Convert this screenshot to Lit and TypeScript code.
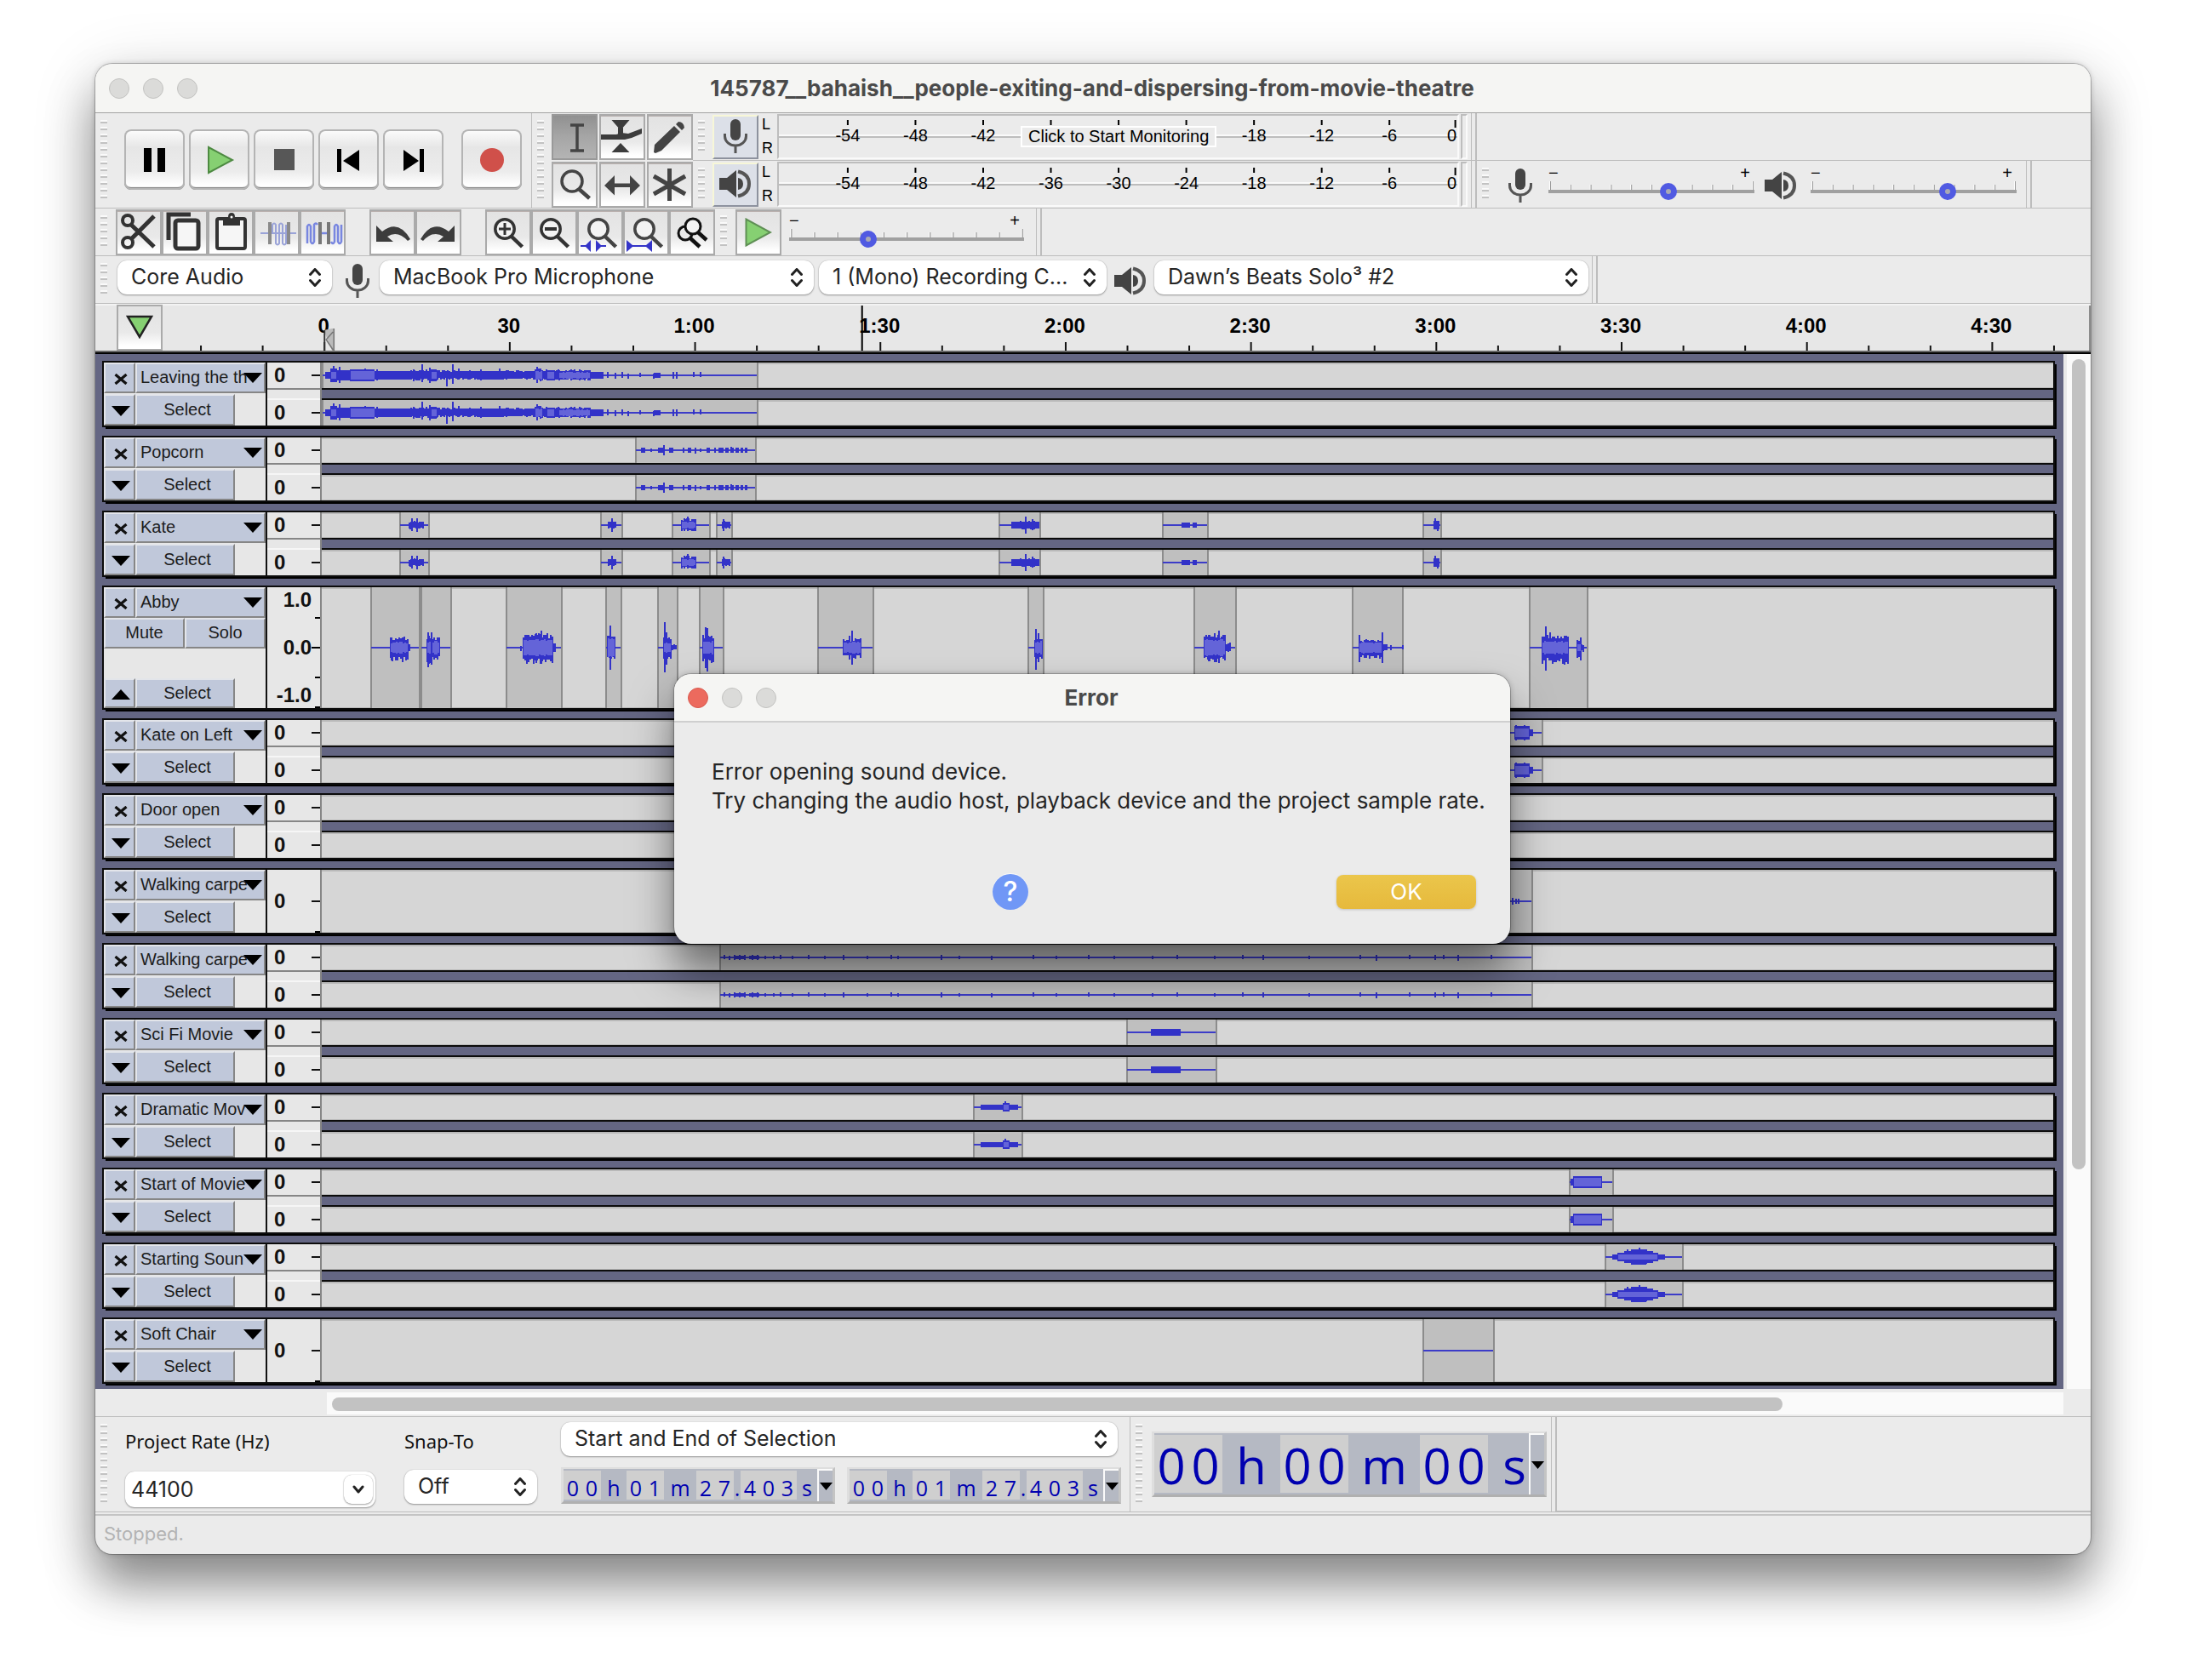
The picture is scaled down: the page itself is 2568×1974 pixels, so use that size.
import { LitElement, html, css, svg, nothing } from "lit";
import { customElement, property } from "lit/decorators.js";

type Burst = [number, number, number, number, number?];
type Spike = [number, number, number];
interface Clip {
  from: number;
  to: number;
  bursts?: Burst[];
  spikes?: Spike[];
}
interface Track {
  name: string;
  kind: "stereo" | "mono" | "tall";
  clips: Clip[];
}

const LANE = 2034;

const leaving: Clip[] = [{
  from: 0, to: 513,
  bursts: [
    [4, 10, 4, 4], [10, 18, 8, 8, 4], [18, 33, 6, 6], [33, 62, 7, 7, 5], [62, 104, 5, 5], [104, 135, 7, 6], [128, 135, 7, 7, 4],
    [135, 182, 6, 5], [182, 214, 5, 5], [214, 250, 6, 5], [250, 259, 8, 7, 5], [259, 278, 7, 6], [264, 274, 6, 6, 4],
    [278, 316, 7, 6, 4], [316, 331, 4, 4], [390, 398, 3, 3],
  ],
  spikes: [[13, 11, 8], [20, 10, 9], [50, 8, 7], [64, 7, 6], [107, 7, 7], [117, 13, 8], [126, 9, 9], [146, 5, 13], [153, 13, 10], [160, 8, 5], [186, 7, 6], [208, 8, 5], [252, 10, 9], [335, 4, 3], [344, 3, 4], [352, 4, 3], [359, 2, 4], [373, 3, 2], [389, 2, 4], [412, 4, 4], [416, 4, 4], [436, 4, 2], [444, 4, 2]],
}];
const popcorn: Clip[] = [{
  from: 368, to: 511,
  bursts: [[375, 380, 3, 3], [395, 403, 3, 3], [408, 413, 3, 3], [430, 434, 3, 3], [452, 456, 3, 3], [466, 472, 3, 3], [474, 478, 3, 3], [480, 484, 3, 3], [486, 490, 3, 3], [492, 495, 3, 3], [497, 500, 3, 3]],
  spikes: [[386, 2, 2], [401, 6, 6], [424, 3, 3], [438, 3, 4], [444, 2, 2], [461, 3, 3], [480, 4, 3]],
}];
const kate: Clip[] = [
  { from: 91, to: 127, bursts: [[102, 120, 5, 4]], spikes: [[105, 8, 7], [111, 8, 8], [103, 3, 5]] },
  { from: 327, to: 354, bursts: [[336, 345, 5, 4]], spikes: [[340, 8, 8]] },
  { from: 411, to: 457, bursts: [[422, 440, 8, 7, 4]], spikes: [[429, 10, 7], [425, 8, 7]] },
  { from: 463, to: 483, bursts: [[470, 479, 5, 4]], spikes: [[471, 7, 7]] },
  { from: 795, to: 845, bursts: [[810, 843, 4, 4], [820, 838, 5, 6]], spikes: [[826, 10, 10], [834, 7, 6]] },
  { from: 987, to: 1042, bursts: [[1010, 1020, 3, 3], [1023, 1028, 3, 3]] },
  { from: 1293, to: 1316, bursts: [[1306, 1313, 5, 5]], spikes: [[1307, 8, 5], [1310, 5, 7]] },
];
const abby: Clip[] = [
  { from: 57, to: 116, bursts: [[80, 101, 13, 16, 7], [101, 104, 4, 4]], spikes: [[81, 12, 15], [94, 12, 17]] },
  { from: 116, to: 153, bursts: [[123, 129, 15, 21, 8], [129, 138, 13, 15, 8]], spikes: [[124, 18, 23], [128, 18, 20]] },
  { from: 216, to: 283, bursts: [[236, 271, 17, 19, 10], [271, 275, 5, 5]], spikes: [[257, 20, 19], [242, 15, 17], [251, 17, 18], [233, 2, 4]] },
  { from: 333, to: 353, bursts: [[335, 344, 14, 15, 11]], spikes: [[338, 26, 26]] },
  { from: 394, to: 419, bursts: [[401, 411, 13, 14, 6], [411, 417, 4, 3]], spikes: [[402, 30, 29], [404, 18, 20]] },
  { from: 443, to: 473, bursts: [[447, 461, 16, 18, 8]], spikes: [[450, 24, 24], [452, 23, 28]] },
  { from: 582, to: 649, bursts: [[612, 634, 11, 13, 7]], spikes: [[622, 20, 20], [619, 14, 14]] },
  { from: 829, to: 849, bursts: [[837, 846, 13, 14, 8]], spikes: [[838, 22, 26], [841, 17, 17]] },
  { from: 1024, to: 1075, bursts: [[1036, 1062, 16, 17, 10], [1062, 1067, 6, 5]], spikes: [[1041, 15, 16], [1053, 20, 18], [1048, 17, 17], [1060, 14, 14]] },
  { from: 1210, to: 1271, bursts: [[1218, 1246, 11, 13, 7], [1246, 1251, 5, 4]], spikes: [[1218, 15, 17], [1245, 18, 18], [1255, 3, 3], [1269, 3, 2]] },
  { from: 1418, to: 1488, bursts: [[1433, 1465, 15, 19, 8], [1474, 1479, 12, 17, 4], [1479, 1482, 4, 5]], spikes: [[1437, 25, 27], [1442, 18, 14], [1459, 13, 20], [1461, 14, 10]] },
];
const kateLeft: Clip[] = [{ from: 1310, to: 1435, bursts: [[1401, 1419, 8, 8, 5], [1419, 1423, 4, 4]], spikes: [[1402, 9, 9], [1412, 9, 9]] }];
const walkingMono: Clip[] = [{ from: 468, to: 1423, spikes: [[1398, 4, 4], [1402, 3, 3], [1405, 3, 3]] }];
const walking: Clip[] = [{
  from: 467, to: 1423,
  bursts: [[486, 498, 2, 2], [502, 514, 2, 2]],
  spikes: [[472, 3, 2], [478, 2, 3], [484, 3, 3], [490, 3, 3], [496, 3, 3], [505, 3, 3], [511, 3, 3], [520, 2, 2], [530, 2, 2], [538, 3, 2], [552, 2, 2], [571, 3, 2], [590, 2, 2], [612, 3, 3], [640, 2, 2], [668, 3, 2], [676, 2, 2], [727, 3, 3], [748, 2, 2], [786, 2, 3], [835, 3, 2], [862, 2, 2], [900, 3, 2], [930, 2, 2], [975, 2, 2], [1004, 3, 2], [1048, 2, 2], [1081, 3, 2], [1105, 3, 3], [1159, 2, 2], [1219, 3, 2], [1238, 3, 4], [1277, 3, 2], [1307, 3, 3], [1317, 3, 2], [1334, 3, 4], [1373, 3, 2]],
}];
const sciFi: Clip[] = [{ from: 945, to: 1052, bursts: [[974, 1009, 4, 4]] }];
const dramatic: Clip[] = [{ from: 765, to: 824, bursts: [[774, 818, 3, 3], [800, 808, 5, 5, 3]], spikes: [[802, 7, 4]] }];
const startMovie: Clip[] = [{ from: 1465, to: 1518, bursts: [[1467, 1470, 4, 4], [1470, 1504, 7, 7, 5]] }];
const starting: Clip[] = [{
  from: 1507, to: 1600,
  bursts: [[1516, 1578, 3, 3], [1522, 1570, 5, 5, 3], [1530, 1564, 7, 7, 3], [1538, 1556, 9, 9, 3]],
  spikes: [[1533, 9, 6], [1547, 11, 9], [1555, 9, 8]],
}];
const softChair: Clip[] = [{ from: 1293, to: 1378 }];

const TRACKS: Track[] = [
  { name: "Leaving the th", kind: "stereo", clips: leaving },
  { name: "Popcorn", kind: "stereo", clips: popcorn },
  { name: "Kate", kind: "stereo", clips: kate },
  { name: "Abby", kind: "tall", clips: abby },
  { name: "Kate on Left", kind: "stereo", clips: kateLeft },
  { name: "Door open", kind: "stereo", clips: [] },
  { name: "Walking carpe", kind: "mono", clips: walkingMono },
  { name: "Walking carpe", kind: "stereo", clips: walking },
  { name: "Sci Fi Movie", kind: "stereo", clips: sciFi },
  { name: "Dramatic Mov", kind: "stereo", clips: dramatic },
  { name: "Start of Movie", kind: "stereo", clips: startMovie },
  { name: "Starting Soun", kind: "stereo", clips: starting },
  { name: "Soft Chair", kind: "mono", clips: softChair },
];

const noise = (n: number) => {
  const s = Math.sin(n * 12.9898) * 43758.5453;
  return s - Math.floor(s);
};

function peaksPath(clip: Clip, mid: number): string {
  let d = "";
  for (const [a, b, up, down] of clip.bursts ?? []) {
    if (up === down) {
      d += `M${a} ${mid - up}H${b}V${mid + down}H${a}z`;
      continue;
    }
    for (let x = a; x < b; x += 2) {
      const top = Math.round(up * (0.65 + 0.35 * noise(x)));
      const bottom = Math.round(down * (0.65 + 0.35 * noise(x + 7)));
      d += `M${x} ${mid - top}h2V${mid + bottom}h-2z`;
    }
  }
  for (const [x, up, down] of clip.spikes ?? []) d += `M${x} ${mid - up}h2V${mid + down}h-2z`;
  return d;
}

function bodyPath(clip: Clip, mid: number): string {
  let d = "";
  for (const [a, b, up, down, rms] of clip.bursts ?? []) {
    if (!rms) continue;
    for (let x = a + 1; x < b - 1; x += 2) {
      const r = up === down ? rms : Math.round(rms * (0.75 + 0.25 * noise(x + 3)));
      d += `M${x} ${mid - r}h2V${mid + r}h-2z`;
    }
  }
  return d;
}

const shared = css`
  :host { box-sizing: border-box; }
  *, *::before, *::after { box-sizing: border-box; }
  button, select, input { font: inherit; color: inherit; margin: 0; padding: 0; border: 0; border-radius: 0; background: none; }
  button { display: flex; align-items: center; justify-content: center; }
  svg { display: block; flex: none; }
`;

const mic = html`<svg width="28" height="40" viewBox="0 0 28 40" aria-hidden="true"><rect x="8" y="0" width="12" height="25" rx="6" fill="#454545"/><path d="M1.500 17v3a12.500 11 0 0 0 25 0v-3M14 31v9" fill="none" stroke="#555" stroke-width="3"/></svg>`;
const speaker = html`<svg width="38" height="36" viewBox="0 0 38 36" aria-hidden="true"><path d="M0 11h9L20 2v32L9 25H0z" fill="#444"/><path d="M22 11q6 1 6 7t-6 7z" fill="#444"/><path d="M22 3.500q13 3 13 14.500T22 32.500" fill="none" stroke="#555" stroke-width="4"/></svg>`;
const playIcon = html`<svg width="32" height="34" viewBox="0 0 32 34" aria-hidden="true"><path d="M1.500 1.500v31L30 17z" fill="#86d072" stroke="#5f8f55" stroke-width="2"/></svg>`;

@customElement("wave-lane")
class WaveLane extends LitElement {
  @property({ attribute: false }) clips: Clip[] = [];
  @property({ type: Number }) height = 30;

  static styles = css`
    :host { display: block; background: #d6d6d6; box-shadow: inset 0 2px #b9b9b9, inset 0 -1px #b9b9b9; }
    svg { display: block; width: 100%; }
  `;

  render() {
    const h = this.height;
    const mid = h / 2;
    return html`<svg height=${h} viewBox="0 0 ${LANE} ${h}" preserveAspectRatio="none" aria-hidden="true">
      ${this.clips.map((c) => svg`
        <rect x=${c.from} y="0" width=${c.to - c.from} height=${h} fill="#bfbfbf"/>
        <path d="M${c.from} 0h2v${h}h-2zM${c.to - 2} 0h2v${h}h-2z" fill="#8c8c8c"/>
        <path d="M${c.from + 1} ${mid - 1}H${c.to - 2}v2H${c.from + 1}z" fill="#3c3cc8"/>
        <path d=${peaksPath(c, mid)} fill="#3232c8"/>
        <path d=${bodyPath(c, mid)} fill="#6464d8"/>`)}
    </svg>`;
  }
}

@customElement("track-row")
class TrackRow extends LitElement {
  @property({ attribute: false }) track!: Track;

  static styles = [shared, css`
    :host { display: block; font: 20px/24px "Liberation Sans", Arial, sans-serif; color: #1c1c1c; }
    .track { display: flex; border: 2px solid #0c0c0c; box-shadow: 3px 3px 0 -1px #000; background: #e7e7e7; }
    .panel { display: flex; flex-direction: column; flex: none; width: 192px; border-right: 2px solid #111; }
    .bar { display: flex; height: 36px; }
    .bar.last { height: 38px; padding-top: 1px; }
    .tall .bar.last { height: 36px; }
    .space { flex: 1; }
    .cell { height: 100%; padding-bottom: 2px; background: #c0c8da; border: solid; border-width: 2px; border-color: #e3e5ea #868686 #868686 #e3e5ea; }
    .icon { width: 37px; padding: 2px 0 0 2px; }
    .name { flex: 1; min-width: 0; padding: 0 2px 2px 4px; }
    .name span { flex: 1; min-width: 0; white-space: nowrap; text-align: left; }
    .name svg { margin-top: 2px; }
    .select { width: 117px; padding-left: 5px; }
    .half { flex: 1; }
    .scale { display: flex; flex-direction: column; flex: none; width: 64px; border-right: 2px solid #868686; font: bold 24px/30px "Liberation Sans", Arial, sans-serif; color: #111; }
    .mark { display: flex; align-items: center; justify-content: space-between; height: 30px; padding-left: 8px; }
    .mark::after { content: ""; width: 10px; height: 2px; background: #111; }
    .upper { box-shadow: 0 2px #868686; margin-bottom: 12px; }
    .lower { height: 32px; border-top: 2px solid #f6f6f6; }
    .whole { flex: 1; height: auto; }
    .levels { display: flex; flex-direction: column; flex: 1; justify-content: space-between; align-items: flex-end; padding-right: 10px; }
    .scale-tall { position: relative; display: flex; flex: 1; }
    .ticks { position: absolute; right: 0; top: 0; }
    .lanes { flex: 1; min-width: 0; }
    .gutter { height: 14px; border: solid #0c0c0c; border-width: 2px 0; background: #646683; }
  `];

  private scale() {
    const { kind } = this.track;
    if (kind === "stereo") return html`<div class="mark upper">0</div><div class="mark lower">0</div>`;
    if (kind === "mono") return html`<div class="scale-tall"><div class="mark whole">0</div>
      <svg class="ticks" width="6" height="74" aria-hidden="true"><path d="M0 72h6v2H0z"/></svg></div>`;
    return html`<div class="scale-tall"><div class="levels"><span>1.0</span><span>0.0</span><span>-1.0</span></div>
      <svg class="ticks" width="10" height="142" aria-hidden="true"><path d="M4 35h6v2H4zM0 70h10v2H0zM4 105h6v2H4zM4 140h6v2H4z"/></svg></div>`;
  }

  render() {
    const t = this.track;
    const tall = t.kind === "tall";
    return html`<section class="track ${t.kind}" aria-label=${t.name}>
      <div class="panel">
        <div class="bar">
          <button class="cell icon" aria-label="Close"><svg width="16" height="13" viewBox="0 0 16 13"><path d="M1.500 1 14.500 12M14.500 1 1.500 12" stroke="#111" stroke-width="3.200"/></svg></button>
          <button class="cell name"><span>${t.name}</span><svg width="22" height="12" viewBox="0 0 22 12"><path d="M0 0h22L11 12z"/></svg></button>
        </div>
        ${tall ? html`<div class="bar"><button class="cell half">Mute</button><button class="cell half">Solo</button></div><div class="space"></div>` : nothing}
        <div class="bar last">
          <button class="cell icon" aria-label=${tall ? "Collapse" : "Expand"}><svg width="22" height="12" viewBox="0 0 22 12"><path d=${tall ? "M0 12h22L11 0z" : "M0 0h22L11 12z"}/></svg></button>
          <button class="cell select">Select</button>
        </div>
      </div>
      <div class="scale">${this.scale()}</div>
      <div class="lanes">
        <wave-lane .clips=${t.clips} .height=${tall ? 142 : t.kind === "mono" ? 74 : 30}></wave-lane>
        ${t.kind === "stereo" ? html`<div class="gutter"></div><wave-lane .clips=${t.clips}></wave-lane>` : nothing}
      </div>
    </section>`;
  }
}

@customElement("tick-slider")
class TickSlider extends LitElement {
  @property() label = "";
  @property({ type: Number }) value = 0;

  static styles = [shared, css`
    :host { display: flex; flex-direction: column; width: 242px; font: 20px/14px "Liberation Sans", Arial, sans-serif; color: #000; }
    .signs { display: flex; justify-content: space-between; padding: 0 5px 0 0; }
    .scale { width: 100%; margin: 3px 0 -9px; }
    input { appearance: none; -webkit-appearance: none; display: block; width: 100%; height: 22px; }
    input::-webkit-slider-runnable-track { height: 4px; background: #a0a0a0; }
    input::-webkit-slider-thumb { appearance: none; -webkit-appearance: none; width: 20px; height: 20px; margin-top: -8px; border-radius: 50%; border: 7px solid #505ae2; background: #a9a9b4; }
  `];

  render() {
    return html`<div class="signs" aria-hidden="true"><span>−</span><span>+</span></div>
      <svg class="scale" height="10" viewBox="0 0 242 10" preserveAspectRatio="none" aria-hidden="true">
        ${Array.from({ length: 11 }, (_, i) => {
          const x = 1 + i * 23.8;
          const y = i % 10 === 0 ? 0 : 4;
          return svg`<path d="M${x} ${y}h1v10h-1z" fill="#fff"/><path d="M${x + 1} ${y}h1v10h-1z" fill="#999"/>`;
        })}
      </svg>
      <input type="range" min="0" max="1000" .value=${String(this.value)} aria-label=${this.label}>`;
  }
}

@customElement("level-meter")
class LevelMeter extends LitElement {
  @property() label = "";
  @property() prompt = "";
  @property({ attribute: false }) icon: unknown = nothing;

  static styles = [shared, css`
    :host { display: flex; align-items: center; gap: 4px; font: 20px/24px "Liberation Sans", Arial, sans-serif; color: #000; }
    .source { width: 54px; height: 52px; padding-bottom: 2px; background: #dce0e8; border: solid; border-width: 2px; border-color: #f7f7d8 #8d929e #8d929e #f7f7d8; }
    .sides { display: flex; flex-direction: column; justify-content: space-between; width: 14px; height: 52px; padding-bottom: 2px; font-size: 18px; line-height: 22px; }
    .meter { position: relative; width: 801px; height: 53px; border: solid; border-width: 2px; border-color: #bdbdbd #fafafa #fafafa #bdbdbd; }
    .meter svg { width: 100%; }
    .prompt { position: absolute; left: 284px; top: 12px; height: 25px; padding: 0 7px 2px; border: 2px solid #fff; background: #ebebeb; white-space: nowrap; }
    .clip { width: 8px; height: 53px; margin-left: -2px; border: solid; border-width: 2px; border-color: #bdbdbd #fafafa #fafafa #bdbdbd; }
  `];

  render() {
    const marks = [-54, -48, -42, -36, -30, -24, -18, -12, -6];
    const covered = (m: number) => this.prompt !== "" && m >= -36 && m <= -24;
    return html`<button class="source" aria-label=${this.label}>${this.icon}</button>
      <div class="sides"><span>L</span><span>R</span></div>
      <div class="meter" role="meter" aria-label=${this.label} aria-valuenow="-60" aria-valuemin="-60" aria-valuemax="0">
        <svg height="49">
          <rect x="0" y="22" width="100%" height="2" fill="#fafafa"/><rect x="0" y="24" width="100%" height="2" fill="#bdbdbd"/>
          ${marks.map((m, i) => {
            const x = `${10.15 + i * 9.98}%`;
            return svg`<line x1=${x} x2=${x} y1="5" y2="11" stroke="#000" stroke-width="2"/>${covered(m) ? nothing : svg`<text x=${x} y="30" text-anchor="middle">${m}</text>`}`;
          })}
          <line x1="99.700%" x2="99.700%" y1="5" y2="14" stroke="#000" stroke-width="2"/>
          <text x="99.900%" y="30" text-anchor="end">0</text>
        </svg>
        ${this.prompt ? html`<button class="prompt">${this.prompt}</button>` : nothing}
      </div>
      <div class="clip"></div>`;
  }
}

@customElement("popup-select")
class PopupSelect extends LitElement {
  @property() value = "";
  @property() label = "";

  static styles = [shared, css`
    :host { display: block; position: relative; flex: none; font: 25px/30px Inter, "Liberation Sans", sans-serif; color: #252525; }
    select { appearance: none; -webkit-appearance: none; width: 100%; height: 40px; padding: 0 40px 3px 16px; border-radius: 11px; background: #fff; box-shadow: 0 1px 2px rgba(0, 0, 0, 0.35), 0 0 1px rgba(0, 0, 0, 0.3); }
    svg { position: absolute; right: 13px; top: 9px; pointer-events: none; }
  `];

  render() {
    return html`<select aria-label=${this.label}><option>${this.value}</option></select>
      <svg width="14" height="22" viewBox="0 0 14 22" aria-hidden="true"><path d="M1.500 7.500 7 1.500l5.500 6M1.500 14.500l5.500 6 5.500-6" fill="none" stroke="#222" stroke-width="3" stroke-linejoin="round" stroke-linecap="round"/></svg>`;
  }
}

@customElement("time-field")
class TimeField extends LitElement {
  @property() value = "";
  @property() label = "";

  static styles = [shared, css`
    :host { display: block; flex: none; border: solid; border-width: 2px 3px 3px; border-color: #dedede #c4c4c4 #b0b0b0 #dedede; color: #0000b0; font: 500 25px/34px "Open Sans", "DejaVu Sans", sans-serif; }
    .time { display: flex; align-items: stretch; height: 38px; padding: 2px 0; background: #b5b9c3; }
    .digits { display: flex; background: #cfcfcf; line-height: 40px; }
    .digit { width: 22px; text-align: center; }
    .unit { display: flex; justify-content: center; line-height: 40px; }
    .h { width: 30px; }
    .m { width: 38px; }
    .s { width: 24px; }
    .dot { width: 8px; }
    .drop { width: 18px; margin: -2px 0; border: solid #fafafa; border-width: 2px 0 0 2px; }
    :host([big]) { font-size: 58px; }
    :host([big]) .time { height: 72px; }
    :host([big]) .digits, :host([big]) .unit { line-height: 72px; }
    :host([big]) .digit { width: 40px; }
    :host([big]) .h { width: 68px; }
    :host([big]) .m { width: 84px; }
    :host([big]) .s { width: 48px; padding-left: 14px; }
  `];

  render() {
    const parts = this.value.match(/\d+|[hms.]/g) ?? [];
    return html`<div class="time" role="group" aria-label=${this.label}>
      ${parts.map((p) => /\d/.test(p)
        ? html`<span class="digits">${[...p].map((d) => html`<span class="digit">${d}</span>`)}</span>`
        : html`<span class="unit ${p === "." ? "dot" : p}">${p}</span>`)}
      <button class="drop" aria-label="Format"><svg width="15" height="9" viewBox="0 0 15 9"><path d="M0 0h15L7.500 9z"/></svg></button>
    </div>`;
  }
}

const LOUPE = svg`<circle cx="23" cy="23" r="11.200" fill="#fff" fill-opacity=".5"/><path d="M31 32 43.500 44" stroke-width="4.500"/>`;

const TOOLS = [
  { label: "Selection", down: true, art: svg`<path d="M22 13h16M22 43h16M30 13v30" fill="none" stroke="#444" stroke-width="3.500"/>` },
  { label: "Envelope", art: svg`<path d="M14.500 7h21L25 19zM14.500 45h21L25 34z" fill="#3c3c3c"/><path d="M2 24h18l6-2 8 1 16-6v6l-12 5-8 2H2z" fill="#3c3c3c"/><path d="M25 16v8" stroke="#3c3c3c" stroke-width="6"/>` },
  { label: "Draw", art: svg`<path d="M8 45l1-9 23-22 7 7-22 22-7 3zM34 12l3-3q6 0 7 7l-3 3z" fill="#444"/>` },
  { label: "Zoom", art: svg`<g fill="none" stroke="#444" stroke-width="3.500"><circle cx="24" cy="23" r="12"/><path d="M32 32l12.500 11" stroke-width="4.500"/></g>` },
  { label: "Time Shift", art: svg`<path d="M6 28l12-12v9.500h18V16l12 12-12 11.500V30H18v9.500z" fill="#444"/>` },
  { label: "Multi", art: svg`<path d="M26.500 8v38M8 17l37 21M45 17L8 38" stroke="#444" stroke-width="5"/>` },
];

const EDITS = [
  [
    { label: "Cut", art: svg`<g fill="none" stroke="#333"><circle cx="14" cy="13" r="6" stroke-width="4"/><circle cx="14" cy="39" r="6" stroke-width="4"/><path d="M18 18l27 26M18 35L45 8" stroke-width="5"/></g>` },
    { label: "Copy", art: svg`<g fill="none" stroke="#333"><path d="M8 36V6h26" stroke-width="5"/><rect x="16" y="13" width="27" height="33" rx="3" stroke-width="5" fill="#f6f6f6"/></g>` },
    { label: "Paste", art: svg`<rect x="11" y="11" width="33" height="35" rx="2" fill="#f6f6f6" stroke="#333" stroke-width="4"/><path d="M18 9h6q0-5 4-5t4 5h6v10H18z" fill="#333"/><circle cx="28" cy="9" r="1.500" fill="#fff"/>` },
    { label: "Trim", art: svg`<path d="M8 28h42" stroke="#9aa3d8" stroke-width="2"/><path d="M22 28V18q2-3 4 0v22q2 3 4 0V18q2-3 4 0v22q2 3 4 0V18" fill="none" stroke="#9aa3d8" stroke-width="2"/><path d="M19 15v26M41 15v26" stroke="#8a8a8a" stroke-width="4"/>` },
    { label: "Silence", art: svg`<path d="M9 40V20q2-4 4 0v18q2 4 4 0V18q2-3 4 0M24 28h10M37 38q2 4 4 0V20q2-4 4 0v18q2 4 4 0V18" fill="none" stroke="#7886e0" stroke-width="2.500"/><path d="M24 15v26M34 15v26" stroke="#777" stroke-width="4"/>` },
  ],
  [
    { label: "Undo", art: svg`<path d="M8 19v19h20l-7-6q12-8 24 5l3-2Q34 11 15 26z" fill="#3c3c3c"/>` },
    { label: "Redo", art: svg`<path d="M46 19v19H26l7-6q-12-8-24 5l-3-2Q20 11 39 26z" fill="#3c3c3c"/>` },
  ],
  [
    { label: "Zoom In", art: svg`<g fill="none" stroke="#333" stroke-width="3.500">${LOUPE}<path d="M23 16v14M16 23h14" stroke-width="3"/></g>` },
    { label: "Zoom Out", art: svg`<g fill="none" stroke="#333" stroke-width="3.500">${LOUPE}<path d="M16 23h14" stroke-width="4"/></g>` },
    { label: "Fit Selection", art: svg`<g fill="none" stroke="#444" stroke-width="3.500"><g transform="translate(2 0)">${LOUPE}</g></g><path d="M4 42h6l6-6v14l-6-6H4zM34 42h-6l-6-6v14l6-6h6z" fill="#3434c8"/>` },
    { label: "Fit Project", art: svg`<g fill="none" stroke="#444" stroke-width="3.500"><g transform="translate(2 0)">${LOUPE}</g></g><path d="M4 36l7 6h16l7-6v14l-7-6H11l-7 6z" fill="#3434c8"/>` },
    { label: "Zoom Toggle", art: svg`<g fill="none" stroke="#111" stroke-width="3"><circle cx="19" cy="28" r="8"/><path d="M25 34l11 10" stroke-width="4.500"/><circle cx="28" cy="20" r="9" fill="#f4f4f4"/><path d="M34 27l10 9" stroke-width="4.500"/></g>` },
  ],
];

const TRANSPORT = [
  { label: "Pause", art: svg`<path d="M23 22h9v28h-9zM39 22h9v28h-9z" fill="#000"/>` },
  { label: "Play", art: svg`<path d="M23 21v30L51 36z" fill="#86d072" stroke="#4e8a42" stroke-width="2"/>` },
  { label: "Stop", art: svg`<path d="M24 23h24v25H24z" fill="#575757"/>` },
  { label: "Skip to Start", art: svg`<path d="M22 23h5v27h-5zM48 24v25L29 37z" fill="#000"/>` },
  { label: "Skip to End", art: svg`<path d="M43 23h5v27h-5zM24 24v25l18-12z" fill="#000"/>` },
  { label: "Record", art: svg`<circle cx="36" cy="36" r="14" fill="#d0504a"/>` },
];

@customElement("app-root")
class AppRoot extends LitElement {
  static styles = [shared, css`
    :host { display: block; min-height: 100vh; padding: 75px 112px 148px; background: #fff; overflow: hidden; font: 25px/34px Inter, "Liberation Sans", sans-serif; color: #252525; }
    .window { position: relative; border-radius: 20px; background: #ebebeb; box-shadow: 0 0 0 1px rgba(0, 0, 0, 0.22), 0 0 6px rgba(0, 0, 0, 0.2), 0 36px 56px rgba(0, 0, 0, 0.42), 0 12px 80px rgba(0, 0, 0, 0.14); }
    .title { display: grid; grid-template-columns: 1fr auto 1fr; align-items: center; height: 58px; padding: 0 18px 0 16px; border-bottom: 1px solid #a2a2a2; border-radius: 20px 20px 0 0; background: #f5f5f3; }
    h1, h2 { margin: 0; font-size: 26px; line-height: 34px; font-weight: 700; color: #4a4a4a; }
    .lights { display: flex; gap: 16px; }
    .light { width: 24px; height: 24px; border-radius: 50%; background: #dbdbd9; border: 1px solid #c3c3c1; }
    .light.close { background: #ec6a5e; border-color: #d95a4f; }

    .row { display: flex; height: 56px; border-bottom: 1px solid #bdbdbd; }
    .row.double { height: 112px; }
    .grip { flex: none; align-self: flex-start; width: 8px; height: 36px; margin: 8px 0 0 6px; background: repeating-linear-gradient(#fafafa 0 2px, #c2c2c2 2px 4px, transparent 4px 8px); }
    .grip.long { height: 92px; }
    .end { flex: none; width: 7px; margin-left: 4px; border: solid #bdbdbd; border-width: 0 2px 0 1px; }
    .fill { flex: 1; border-bottom: 1px solid #bdbdbd; }

    .transport { display: flex; gap: 5px; width: 513px; border-right: 1px solid #bdbdbd; }
    .keys { display: flex; gap: 5px; padding: 19px 0 0 15px; }
    .key { width: 71px; height: 71px; border-radius: 8px; background: linear-gradient(#fdfdfd, #e6e6e6 30%, #ececec 70%, #fff 92%); box-shadow: inset 0 0 0 2px #b4b4b4, inset 0 -3px 1px #7d7d7d; }
    .key:last-child { margin-left: 16px; }
    .tools { display: grid; grid-template-columns: repeat(3, 54px); gap: 2px; padding-top: 1px; margin-left: 9px; align-content: start; }
    .tool { flex: none; width: 54px; height: 54px; background: linear-gradient(#e2e2e2, #e9e9e9 60%, #fff 90%); box-shadow: inset 0 0 0 2px #aaa, inset 0 3px #b9b0ae; }
    .tool.down { background: linear-gradient(#8f8f8f, #a6a6a6 50%, #b5b5b5); box-shadow: inset 0 0 0 2px #999; }
    .meters { display: flex; flex-direction: column; flex: 1; }
    .meter-row { display: flex; height: 56px; border-bottom: 1px solid #bdbdbd; }
    .meter-row:last-child { height: 55px; border-bottom: 0; }
    level-meter { margin-left: 9px; }
    .mixer { display: flex; align-items: flex-start; padding-right: 7px; }
    .mixer .mic-slot { margin: 9px 19px 0 23px; }
    .mixer .speaker-slot { margin: 11px 16px 0 12px; }
    tick-slider { margin-top: 7px; }

    .edits { display: flex; gap: 28px; padding-top: 1px; margin-left: 10px; }
    .set { display: flex; }
    .speed { display: flex; padding-top: 1px; margin-left: 10px; }
    .speed tick-slider { width: 276px; margin: 6px 10px 0 9px; }

    .devices popup-select { margin-top: 5px; }
    .devices .mic-slot { margin: 9px 12px 0 16px; }
    .devices .speaker-slot { margin: 11px 9px 0 9px; }
    .host { width: 252px; margin-left: 12px; }
    .input { width: 510px; }
    .channels { width: 338px; margin-left: 6px; }

    .ruler { display: flex; height: 59px; border-bottom: 2px solid #000; background: #e7e7e7; box-shadow: inset 0 -2px #666, inset 0 2px #f3f3f3, inset -2px 0 #8c8c8c; font: bold 24px/30px "Liberation Sans", Arial, sans-serif; color: #111; }
    .pin { width: 54px; height: 54px; margin: 1px 0 0 25px; background: linear-gradient(#e2e2e2, #e9e9e9 60%, #fff 90%); box-shadow: inset 0 0 0 2px #aaa; }
    .pin svg { margin-bottom: 2px; }
    .timeline { flex: 1; min-width: 0; }
    .timeline svg { width: 100%; }

    .workspace { display: flex; }
    .tracks { flex: 1; min-width: 0; display: flex; flex-direction: column; gap: 10px; padding: 8px 10px 6px 8px; background: #646683; }
    .vbar { flex: none; width: 32px; padding: 6px 6px 0 10px; background: #fafafa; box-shadow: inset 4px 0 #e9e9e9; }
    .vthumb { height: 952px; border-radius: 8px; background: #c2c2c2; }
    .hbar { display: flex; height: 32px; padding: 4px 32px 2px 272px; }
    .hrail { flex: 1; padding: 6px; background: #fafafa; }
    .hthumb { width: 84%; height: 16px; border-radius: 8px; background: #c2c2c2; }

    .selection { display: flex; height: 113px; border-top: 1px solid #bdbdbd; border-bottom: 1px solid #bdbdbd; }
    .field { display: flex; flex-direction: column; font: 22px/30px "Noto Sans", "DejaVu Sans", sans-serif; color: #111; }
    .field label, .field .caption { padding-top: 13px; height: 62px; }
    .rate { width: 294px; margin-left: 21px; }
    .snap { width: 156px; margin-left: 34px; }
    .combo { display: flex; align-items: center; height: 42px; margin-top: 2px; padding: 0 3px 0 7px; border-radius: 11px; background: #fff; box-shadow: 0 1px 2px rgba(0, 0, 0, 0.35), 0 0 1px rgba(0, 0, 0, 0.3); }
    .combo input { flex: 1; min-width: 0; font: 25px/30px Inter, "Liberation Sans", sans-serif; color: #252525; outline: 0; }
    .combo button { width: 34px; height: 34px; border-radius: 9px; box-shadow: 0 1px 2px rgba(0, 0, 0, 0.35), 0 0 1px rgba(0, 0, 0, 0.3); }
    .range { width: 654px; margin: 6px 14px 0 28px; }
    .times { display: flex; gap: 14px; margin-top: 13px; }
    .position { display: flex; border-left: 1px solid #bdbdbd; }
    .position time-field { margin: 17px 1px 0 11px; align-self: flex-start; }
    .status { height: 47px; margin-top: 2px; padding: 7px 10px; border-top: 2px solid #c4c4c4; font-size: 22px; line-height: 28px; color: #b3b3b3; }

    .layer { position: absolute; inset: 717px 2px auto 0; display: flex; justify-content: center; }
    .dialog { width: 982px; border-radius: 20px; background: #ebebeb; box-shadow: 0 0 0 1px rgba(0, 0, 0, 0.2), 0 0 6px rgba(0, 0, 0, 0.25), 0 32px 50px rgba(0, 0, 0, 0.5); font-size: 26px; }
    .dialog .title { height: 57px; border-bottom: 2px solid #cfcfcf; }
    .message { padding: 41px 44px 0; white-space: nowrap; }
    .message p { margin: 0; }
    .actions { display: grid; grid-template-columns: 1fr auto 1fr; align-items: center; padding: 69px 40px 40px; }
    .help { grid-column: 1; justify-self: end; width: 42px; height: 42px; margin-right: 75px; border-radius: 50%; background: #7097f6; color: #fff; font-size: 32px; font-weight: 500; box-shadow: 0 -1px #fafafa; }
    .ok { grid-column: 3; justify-self: end; width: 164px; height: 40px; border-radius: 8px; background: linear-gradient(#ebc64b, #e6b93c); color: #fff; box-shadow: 0 1px 3px rgba(0, 0, 0, 0.18); }
  `];

  private timeline() {
    const pct = (x: number) => `${((x - 191) / 2263) * 100}%`;
    const labels = ["0", "30", "1:00", "1:30", "2:00", "2:30", "3:00", "3:30", "4:00", "4:30"];
    const ticks = Array.from({ length: 31 }, (_, i) => i - 2);
    return html`<svg height="55" role="img" aria-label="Timeline">
      ${ticks.map((n) => svg`<line x1=${pct(381 + n * 72.5)} x2=${pct(381 + n * 72.5)} y1=${n % 3 ? 49 : 45} y2="55" stroke="#111" stroke-width="2"/>`)}
      ${labels.map((t, i) => svg`<text x=${pct(380 + i * 217.5)} y="34" text-anchor="middle">${t}</text>`)}
      <svg x=${pct(380)} y="29" width="14" height="26"><path d="M0 2 10 0h3v26h-3z" fill="#bbb"/><path d="M12 0v26M11 4 3 13l8 12" fill="none" stroke="#777" stroke-width="1.500"/><path d="M1 2v24" stroke="#333" stroke-width="2"/></svg>
      <line x1=${pct(1012)} x2=${pct(1012)} y1="2" y2="55" stroke="#000" stroke-width="2"/>
    </svg>`;
  }

  render() {
    return html`<main class="window">
      <header class="title">
        <div class="lights"><span class="light"></span><span class="light"></span><span class="light"></span></div>
        <h1>145787__bahaish__people-exiting-and-dispersing-from-movie-theatre</h1>
      </header>

      <div class="row double">
        <div class="transport">
          <div class="grip long"></div>
          <div class="keys">${TRANSPORT.map((b) => html`<button class="key" aria-label=${b.label}><svg width="71" height="71" viewBox="0 0 71 71">${b.art}</svg></button>`)}</div>
        </div>
        <div class="grip long"></div>
        <div class="tools">${TOOLS.map((b) => html`<button class="tool ${b.down ? "down" : ""}" aria-label=${b.label}><svg width="54" height="54" viewBox="0 0 54 54">${b.art}</svg></button>`)}</div>
        <div class="meters">
          <div class="meter-row">
            <div class="grip"></div>
            <level-meter label="Recording level" prompt="Click to Start Monitoring" .icon=${mic}></level-meter>
            <div class="end"></div>
          </div>
          <div class="meter-row">
            <div class="grip"></div>
            <level-meter label="Playback level" .icon=${speaker}></level-meter>
            <div class="end"></div>
            <div class="grip"></div>
            <div class="mixer">
              <div class="mic-slot">${mic}</div>
              <tick-slider label="Recording volume" value="590"></tick-slider>
              <div class="speaker-slot">${speaker}</div>
              <tick-slider label="Playback volume" value="680"></tick-slider>
            </div>
            <div class="end"></div>
          </div>
        </div>
      </div>

      <div class="row">
        <div class="grip"></div>
        <div class="edits">${EDITS.map((set) => html`<div class="set">${set.map((b) => html`<button class="tool" aria-label=${b.label}><svg width="54" height="54" viewBox="0 0 54 54">${b.art}</svg></button>`)}</div>`)}</div>
        <div class="grip"></div>
        <div class="speed"><button class="tool" aria-label="Play at speed">${playIcon}</button><tick-slider label="Playback speed" value="324"></tick-slider></div>
        <div class="end"></div>
      </div>

      <div class="row devices">
        <div class="grip"></div>
        <popup-select class="host" label="Audio host" value="Core Audio"></popup-select>
        <div class="mic-slot">${mic}</div>
        <popup-select class="input" label="Recording device" value="MacBook Pro Microphone"></popup-select>
        <popup-select class="channels" label="Recording channels" value="1 (Mono) Recording C..."></popup-select>
        <div class="speaker-slot">${speaker}</div>
        <popup-select class="input" label="Playback device" value="Dawn’s Beats Solo³ #2"></popup-select>
        <div class="end"></div>
      </div>

      <div class="ruler">
        <button class="pin" aria-label="Pinned play head"><svg width="32" height="28" viewBox="0 0 32 28"><path d="M2 2h28L16 26z" fill="#86d072" stroke="#222" stroke-width="2.500"/></svg></button>
        <div class="timeline">${this.timeline()}</div>
      </div>

      <div class="workspace">
        <div class="tracks">${TRACKS.map((t) => html`<track-row .track=${t}></track-row>`)}</div>
        <div class="vbar"><div class="vthumb"></div></div>
      </div>
      <div class="hbar"><div class="hrail"><div class="hthumb"></div></div></div>

      <div class="selection">
        <div class="grip long"></div>
        <div class="field rate">
          <label for="rate">Project Rate (Hz)</label>
          <div class="combo"><input id="rate" value="44100"><button aria-label="Choose rate"><svg width="14" height="10" viewBox="0 0 14 10"><path d="M2 2l5 6 5-6" fill="none" stroke="#222" stroke-width="3" stroke-linecap="round" stroke-linejoin="round"/></svg></button></div>
        </div>
        <div class="field snap">
          <span class="caption">Snap-To</span>
          <popup-select label="Snap-To" value="Off"></popup-select>
        </div>
        <div class="range">
          <popup-select label="Selection mode" value="Start and End of Selection"></popup-select>
          <div class="times">
            <time-field label="Selection start" value="00h01m27.403s"></time-field>
            <time-field label="Selection end" value="00h01m27.403s"></time-field>
          </div>
        </div>
        <div class="position">
          <div class="grip long"></div>
          <time-field big label="Audio position" value="00h00m00s"></time-field>
        </div>
        <div class="end"></div>
        <div class="fill"></div>
      </div>
      <footer class="status">Stopped.</footer>

      <div class="layer">
        <section class="dialog" role="alertdialog" aria-label="Error">
          <div class="title">
            <div class="lights"><button class="light close" aria-label="Close"></button><span class="light"></span><span class="light"></span></div>
            <h2>Error</h2>
          </div>
          <div class="message"><p>Error opening sound device.</p><p>Try changing the audio host, playback device and the project sample rate.</p></div>
          <div class="actions"><button class="help" aria-label="Help">?</button><button class="ok">OK</button></div>
        </section>
      </div>
    </main>`;
  }
}
